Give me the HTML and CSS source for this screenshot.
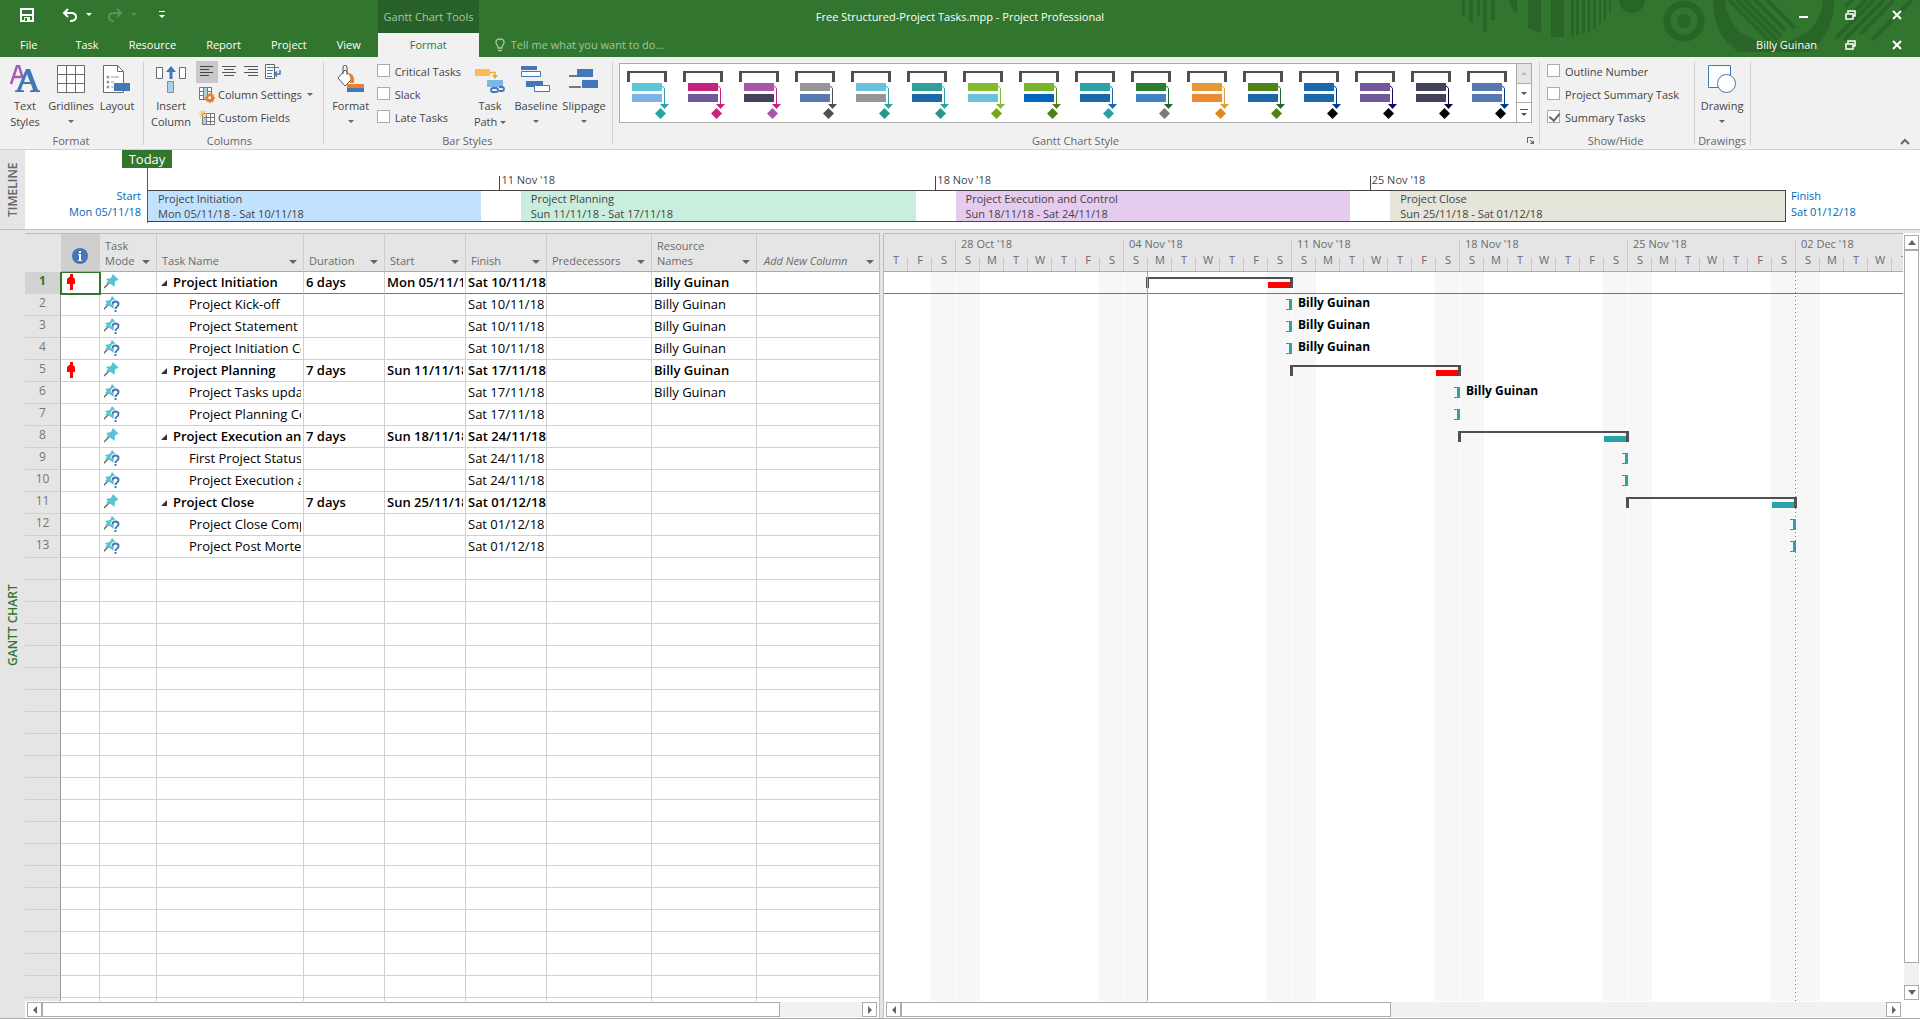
FILE: index.html
```html
<!DOCTYPE html>
<html lang="en">
<head>
    <meta charset="UTF-8">
    <meta name="viewport" content="width=device-width, initial-scale=1.0">
    <title>Free Structured-Project Tasks.mpp - Project Professional</title>
    <link rel="stylesheet" href="styles.css">
</head>
<body>
    <header class="top">
        <!-- Decoration behind the window buttons -->
        <svg class="pattern" width="460" height="57" viewBox="0 0 460 57">
            <g fill="#2a6528">
                <path d="M2 0h3v16h-3zM9 0h4v23h-4zM17 0h3v16h-3zM23 0h4v32h-4zM31 0h4v20h-4z"/>
                <path d="M49 0h8v14q-6-6-8-14zM68 0h13v33q-8-2-13-6zM91 0h13v37h-13zM111 0h3v36h-3zM116 0h3v35h-3zM122 0h3v34h-3zM128 0h2v32h-2zM133 0h3v29h-3zM139 0h2v25h-2zM144 0h2v20h-2zM149 0h2v12h-2z"/>
                <circle cx="172" cy="0" r="13"/>
                <circle cx="224" cy="21" r="7"/>
                <path d="M253 0h12q2 22 18 34l17 8h28l17-8q16-12 18-34h11q0 36-26 52h-69q-26-16-26-52z"/>
            </g>
            <g fill="none" stroke="#2a6528">
                <circle cx="224" cy="21" r="17" stroke-width="7"/>
                <path d="M269 0l44 44M277 0l40 40M285 0l36 36M295 0l30 30M307 0l28 28" stroke-width="4"/>
                <path d="M385 7l7-7M388 18l18-18M376 38l38-38M384 40l40-40M400 34l34-34M412 40l40-40" stroke-width="4"/>
            </g>
        </svg>

        <div class="title-bar">
            <div class="quick">
                <button class="icon-btn save" aria-label="Save"><svg width="14" height="14" viewBox="0 0 14 14"><path d="M1 1h12v12h-12z" fill="none" stroke="#fff" stroke-width="2"/><path d="M2 6h10v2h-10zM4 9h6v5h-6z" fill="#fff"/><path d="M5 10h2v3h-2z" fill="#31752f"/></svg></button>
                <button class="icon-btn undo" aria-label="Undo"><svg width="30" height="14" viewBox="0 0 30 14"><path d="M6 1l-4 4 4 4M2 5h7q5 0 5 4t-6 4" fill="none" stroke="#fff" stroke-width="2"/><path d="M24 5h6l-3 3z" fill="#fff"/></svg></button>
                <button class="icon-btn redo" aria-label="Redo"><svg width="30" height="14" viewBox="0 0 30 14"><path d="M10 1l4 4-4 4M14 5h-7q-5 0-5 4t5 4" fill="none" stroke="#5b9159" stroke-width="2"/><path d="M24 5h6l-3 3z" fill="#5b9159"/></svg></button>
                <button class="icon-btn" aria-label="Customize toolbar"><svg width="6" height="8" viewBox="0 0 6 8"><path d="M0 0h6v1h-6zM0 4h6l-3 3z" fill="#fff"/></svg></button>
            </div>
            <div class="tools-tab">Gantt Chart Tools</div>
            <h1 class="title">Free Structured-Project Tasks.mpp - Project Professional</h1>
            <div class="win-btns">
                <button class="icon-btn" aria-label="Minimize"><svg width="10" height="10" viewBox="0 0 10 10"><path d="M0 6h9v2h-9z" fill="#fff"/></svg></button>
                <button class="icon-btn" aria-label="Restore"><svg width="11" height="10" viewBox="0 0 11 10"><path d="M3 3v-2h7v5h-2M1 4h7v5h-7z" fill="none" stroke="#fff" stroke-width="1.5"/></svg></button>
                <button class="icon-btn" aria-label="Close"><svg width="10" height="10" viewBox="0 0 10 10"><path d="M1 1l8 8M9 1l-8 8" stroke="#fff" stroke-width="2"/></svg></button>
            </div>
        </div>

        <nav class="tabs">
            <button class="tab file">File</button>
            <button class="tab">Task</button>
            <button class="tab">Resource</button>
            <button class="tab">Report</button>
            <button class="tab">Project</button>
            <button class="tab">View</button>
            <button class="tab active">Format</button>
            <label class="tell">
                <svg width="10" height="14" viewBox="0 0 10 14"><path d="M3 10q0-2-1-3t-1-3q0-3 4-3t4 3q0 2-1 3t-1 3zM3 12.500h4" fill="none" stroke="#a3c5a1" stroke-width="1.300"/></svg>
                <input type="text" placeholder="Tell me what you want to do..." aria-label="Tell me what you want to do">
            </label>
            <span class="user">Billy Guinan</span>
            <div class="win-btns">
                <button class="icon-btn" aria-label="Restore document"><svg width="11" height="10" viewBox="0 0 11 10"><path d="M3 3v-2h7v5h-2M1 4h7v5h-7z" fill="none" stroke="#fff" stroke-width="1.500"/></svg></button>
                <button class="icon-btn" aria-label="Close document"><svg width="10" height="10" viewBox="0 0 10 10"><path d="M1 1l8 8M9 1l-8 8" stroke="#fff" stroke-width="2"/></svg></button>
            </div>
        </nav>
    </header>

    <section class="ribbon">
        <div class="group">
            <div class="group-body">
                <button class="big w46">
                    <svg width="30" height="28" viewBox="0 0 30 28"><path d="M1 19L7 1h2l4 13M3 12h8" fill="none" stroke="#a55bb0" stroke-width="2.500"/><path d="M5 27v-1.500l2-.5L16 4h4l8 21 2 .5V27H20v-1.500l3-.5-2-6h-8l-2 6 3 .5V27zM14 17h6l-3-8z" fill="#4278b8"/></svg>
                    <span>Text<br>Styles</span>
                </button>
                <button class="big w46">
                    <svg width="28" height="28" viewBox="0 0 28 28"><path d="M.5.5h27v27h-27z" fill="#fff"/><path d="M.5.5h27v27h-27zM9.500 0v28M18.500 0v28M0 9.500h28M0 18.500h28" fill="none" stroke="#6a6a6a"/></svg>
                    <span>Gridlines</span><i class="caret"></i>
                </button>
                <button class="big w46">
                    <svg width="28" height="28" viewBox="0 0 28 28"><path d="M.5.5h14l6 6v21h-20z" fill="#fff" stroke="#6a6a6a"/><path d="M14.500.5v6h6" fill="none" stroke="#6a6a6a"/><g fill="#999"><circle cx="5" cy="12" r="1.500"/><circle cx="5" cy="17" r="1.500"/><circle cx="5" cy="22" r="1.500"/><path d="M8 11.500h8v1h-8zM8 16.500h3v1h-3zM8 21.500h3v1h-3z"/></g><path d="M11 18h16v8h-16z" fill="#4278b8"/></svg>
                    <span>Layout</span>
                </button>
            </div>
            <div class="group-label">Format</div>
        </div>

        <div class="group columns">
            <div class="group-body">
                <button class="big w50">
                    <svg width="30" height="28" viewBox="0 0 30 28"><path d="M.5 2.500h6v11h-6zM23.500 2.500h6v11h-6z" fill="#fff" stroke="#6a6a6a"/><path d="M15 1l-5 6h3.500v7h3V7H20z" fill="#4278b8"/><path d="M11.500 16.500h6v11h-6z" fill="#a8d3e8" stroke="#8a8a8a"/></svg>
                    <span>Insert<br>Column</span>
                </button>
                <div class="stack">
                    <div class="aligns">
                        <button class="align on" aria-label="Align left"><svg width="14" height="14" viewBox="0 0 14 14"><path d="M0 1.500h13M0 4.500h9M0 7.500h13M0 10.500h9" stroke="#444"/></svg></button>
                        <button class="align" aria-label="Center"><svg width="14" height="14" viewBox="0 0 14 14"><path d="M0 1.500h14M2 4.500h10M0 7.500h14M2 10.500h10" stroke="#555"/></svg></button>
                        <button class="align" aria-label="Align right"><svg width="14" height="14" viewBox="0 0 14 14"><path d="M0 1.500h14M4 4.500h10M0 7.500h14M4 10.500h10" stroke="#555"/></svg></button>
                        <button class="align" aria-label="Wrap text"><svg width="16" height="16" viewBox="0 0 16 16"><path d="M.5.500h9v14h-9z" fill="#fff" stroke="#666"/><path d="M2 3.500h12M2 6.500h6M2 9.500h5M2 12.500h5" stroke="#4278b8"/><path d="M15 6v4h-5M12 7.500L9.500 10l2.500 2.500" fill="none" stroke="#4278b8" stroke-width="1.500"/></svg></button>
                    </div>
                    <button class="small"><svg width="16" height="16" viewBox="0 0 16 16"><path d="M.5.500h12v12h-12zM4.500 0v13M8.500 0v13M0 4.500h13M0 8.500h10" fill="#fff" stroke="#777"/><path d="M5 1h3v11H5z" fill="#a8d3e8"/><circle cx="11" cy="11" r="3" fill="none" stroke="#ec812d" stroke-width="2.500"/><path d="M11 6v2M11 14v2M6 11h2M14 11h2M7.500 7.500L9 9M13 13l1.500 1.500M7.500 14.500L9 13M13 9l1.500-1.500" stroke="#ec812d" stroke-width="1.500"/></svg><span>Column Settings</span><i class="caret"></i></button>
                    <button class="small"><svg width="16" height="16" viewBox="0 0 16 16"><path d="M3.500 3.500h12v11h-12zM7.500 3v12M11.500 3v12M3 7.500h13M3 11.500h13" fill="#fff" stroke="#777"/><path d="M4 8h3v6H4z" fill="#a8d3e8"/><path d="M4 0v8M0 4h8M1 1l6 6M7 1L1 7" stroke="#f2b04c"/></svg><span>Custom Fields</span></button>
                </div>
            </div>
            <div class="group-label">Columns</div>
        </div>

        <div class="group">
            <div class="group-body">
                <button class="big w50">
                    <svg width="28" height="28" viewBox="0 0 28 28"><path d="M8 5l8 8-8 8-7-8z" fill="#fff" stroke="#555"/><path d="M6 9V3q0-3 2-3t2 3v7" fill="none" stroke="#555"/><path d="M11 8q7 0 6 10h-4q1-6-2-10z" fill="#ec812d"/><path d="M10 19h17v4h-17z" fill="#ec812d"/><path d="M10 23h17v4h-17z" fill="#4278b8"/></svg>
                    <span>Format</span><i class="caret"></i>
                </button>
                <div class="stack checks">
                    <label><input type="checkbox">Critical Tasks</label>
                    <label><input type="checkbox">Slack</label>
                    <label><input type="checkbox">Late Tasks</label>
                </div>
                <button class="big w46">
                    <svg width="30" height="28" viewBox="0 0 30 28"><path d="M0 4h15v7H0z" fill="#fdb95c"/><path d="M15 7.500h5V12" fill="none" stroke="#f2a62f" stroke-width="1.500"/><path d="M17 10l3 4 3-4z" fill="#f2a62f"/><path d="M12 15h16v7H12z" fill="#7cb6e8"/><path d="M18 23h3a2 2 0 0 1 0 4h-3a2 2 0 0 1 0-4zM24 22h3a2 2 0 0 1 0 4h-3" fill="none" stroke="#4278b8" stroke-width="1.800"/></svg>
                    <span>Task<br>Path <i class="caret inline"></i></span>
                </button>
                <button class="big w46">
                    <svg width="30" height="28" viewBox="0 0 30 28"><path d="M0 1h16v4H0zM5 16h17v6H5z" fill="#4278b8"/><path d="M.5 6.500h19v5h-19zM13.500 20.500h15v6h-15z" fill="#fff" stroke="#4278b8"/></svg>
                    <span>Baseline</span><i class="caret"></i>
                </button>
                <button class="big w50">
                    <svg width="30" height="28" viewBox="0 0 30 28"><path d="M8 4h16v8H8zM13 15h16v8H13z" fill="#4278b8"/><path d="M0 10h8v2H0zM0 21h12v2H0z" fill="#777"/></svg>
                    <span>Slippage</span><i class="caret"></i>
                </button>
            </div>
            <div class="group-label">Bar Styles</div>
        </div>

        <div class="group gallery-group">
            <div class="gallery">
                <div class="styles" id="styles"></div>
                <div class="gallery-nav">
                    <button disabled aria-label="Previous row"><svg width="6" height="3"><path d="M0 3h6l-3-3z" fill="#bbb"/></svg></button>
                    <button aria-label="Next row"><svg width="6" height="3"><path d="M0 0h6l-3 3z" fill="#555"/></svg></button>
                    <button aria-label="More styles"><svg width="8" height="7"><path d="M0 0h8v1h-8zM1 4h6l-3 3z" fill="#555"/></svg></button>
                </div>
            </div>
            <div class="group-label">Gantt Chart Style</div>
            <button class="launcher" aria-label="Bar styles dialog"><svg width="8" height="8" viewBox="0 0 8 8"><path d="M.5 6V.500H6M3 3l3 3" fill="none" stroke="#666"/><path d="M7 3v4H3z" fill="#666"/></svg></button>
        </div>

        <div class="group show-hide">
            <div class="group-body">
                <div class="stack checks">
                    <label><input type="checkbox">Outline Number</label>
                    <label><input type="checkbox">Project Summary Task</label>
                    <label><input type="checkbox" checked>Summary Tasks</label>
                </div>
            </div>
            <div class="group-label">Show/Hide</div>
        </div>

        <div class="group">
            <div class="group-body">
                <button class="big w50">
                    <svg width="28" height="28" viewBox="0 0 28 28"><path d="M.5.500h22v22H.5z" fill="#fff" stroke="#4278b8"/><circle cx="18.500" cy="18.500" r="9" fill="#fff" stroke="#4278b8"/></svg>
                    <span>Drawing</span><i class="caret"></i>
                </button>
            </div>
            <div class="group-label">Drawings</div>
        </div>
        <button class="collapse" aria-label="Collapse ribbon"><svg width="10" height="7" viewBox="0 0 10 7"><path d="M1 6l4-4 4 4" fill="none" stroke="#666" stroke-width="2"/></svg></button>
    </section>

    <section class="timeline">
        <div class="side">TIMELINE</div>
        <div class="edge start">Start<br>Mon 05/11/18</div>
        <div class="track">
            <span class="today">Today</span>
            <span class="mark" style="left: 21.500%">11 Nov '18</span>
            <span class="mark" style="left: 48.100%">18 Nov '18</span>
            <span class="mark" style="left: 74.600%">25 Nov '18</span>
            <div class="segments">
                <div class="segment blue">Project Initiation<br>Mon 05/11/18 - Sat 10/11/18</div>
                <div class="segment green">Project Planning<br>Sun 11/11/18 - Sat 17/11/18</div>
                <div class="segment purple">Project Execution and Control<br>Sun 18/11/18 - Sat 24/11/18</div>
                <div class="segment beige">Project Close<br>Sun 25/11/18 - Sat 01/12/18</div>
            </div>
        </div>
        <div class="edge">Finish<br>Sat 01/12/18</div>
    </section>

    <main class="panes">
        <div class="side current">GANTT CHART</div>

        <div class="sheet">
            <div class="sheet-scroll">
                <table>
                    <colgroup>
                        <col class="c-num"><col class="c-info"><col class="c-mode"><col class="c-name">
                        <col class="c-date"><col class="c-date"><col class="c-date">
                        <col class="c-pred"><col class="c-pred"><col class="c-add">
                    </colgroup>
                    <thead>
                        <tr>
                            <th class="num"></th>
                            <th class="info"><svg width="16" height="16" viewBox="0 0 16 16"><circle cx="8" cy="8" r="8" fill="#4278b8"/><path d="M7 3h2v2H7zM6 6h3v6h1v1H6v-1h1V7H6z" fill="#fff"/></svg></th>
                            <th>Task<br>Mode</th>
                            <th>Task Name</th>
                            <th>Duration</th>
                            <th>Start</th>
                            <th>Finish</th>
                            <th>Predecessors</th>
                            <th>Resource<br>Names</th>
                            <th class="add">Add New Column</th>
                        </tr>
                    </thead>
                    <tbody id="rows"></tbody>
                </table>
            </div>
            <div class="hbar">
                <button aria-label="Scroll left"><svg width="4" height="8"><path d="M4 0v8l-4-4z" fill="#666"/></svg></button>
                <div class="rail"><div class="thumb" style="width: 90%"></div></div>
                <button aria-label="Scroll right"><svg width="4" height="8"><path d="M0 0v8l4-4z" fill="#666"/></svg></button>
            </div>
        </div>

        <div class="gantt">
            <div class="scale" id="scale"></div>
            <div class="chart" id="chart">
                <div class="line status"></div>
                <div class="line finish"></div>
            </div>
            <div class="hbar">
                <button aria-label="Scroll left"><svg width="4" height="8"><path d="M4 0v8l-4-4z" fill="#666"/></svg></button>
                <div class="rail"><div class="thumb" style="width: 49.700%"></div></div>
                <button aria-label="Scroll right"><svg width="4" height="8"><path d="M0 0v8l4-4z" fill="#666"/></svg></button>
            </div>
        </div>

        <div class="vbar">
            <button aria-label="Scroll up"><svg width="8" height="5"><path d="M0 5h8l-4-5z" fill="#666"/></svg></button>
            <div class="rail"><div class="thumb"></div></div>
            <button aria-label="Scroll down"><svg width="8" height="5"><path d="M0 0h8l-4 5z" fill="#666"/></svg></button>
        </div>
    </main>

    <script>
        const DAY = 24;
        const ROW = 22;
        const ROW_COUNT = 34;

        // start and end are day numbers, counted from the left edge of the chart
        const tasks = [
            { name: 'Project Initiation', days: '6 days', start: 'Mon 05/11/18', finish: 'Sat 10/11/18', who: 'Billy Guinan', from: 11, to: 17, over: true },
            { name: 'Project Kick-off', finish: 'Sat 10/11/18', who: 'Billy Guinan', to: 17 },
            { name: 'Project Statement', finish: 'Sat 10/11/18', who: 'Billy Guinan', to: 17 },
            { name: 'Project Initiation Complete', finish: 'Sat 10/11/18', who: 'Billy Guinan', to: 17 },
            { name: 'Project Planning', days: '7 days', start: 'Sun 11/11/18', finish: 'Sat 17/11/18', who: 'Billy Guinan', from: 17, to: 24, over: true },
            { name: 'Project Tasks updated', finish: 'Sat 17/11/18', who: 'Billy Guinan', to: 24 },
            { name: 'Project Planning Complete', finish: 'Sat 17/11/18', to: 24 },
            { name: 'Project Execution and Control', days: '7 days', start: 'Sun 18/11/18', finish: 'Sat 24/11/18', from: 24, to: 31 },
            { name: 'First Project Status', finish: 'Sat 24/11/18', to: 31 },
            { name: 'Project Execution and Control', finish: 'Sat 24/11/18', to: 31 },
            { name: 'Project Close', days: '7 days', start: 'Sun 25/11/18', finish: 'Sat 01/12/18', from: 31, to: 38 },
            { name: 'Project Close Complete', finish: 'Sat 01/12/18', to: 38 },
            { name: 'Project Post Mortem', finish: 'Sat 01/12/18', to: 38 }
        ];

        // bar, second bar, link, diamond
        const barStyles = [
            ['#5fc6d6', '#7db2e8', '#2aa3a6', '#2aa3a6'],
            ['#c4237f', '#71589b', '#c4237f', '#c4237f'],
            ['#a857a8', '#43435c', '#c4237f', '#a857a8'],
            ['#969696', '#5779b0', '#505050', '#505050'],
            ['#69c1dc', '#969696', '#2aa3a6', '#2a9686'],
            ['#2f9f9c', '#1b68ad', '#2aa3a6', '#2a9686'],
            ['#82bc2e', '#69c1dc', '#82bc2e', '#76a51f'],
            ['#7ab32c', '#0067c0', '#4a801c', '#4a801c'],
            ['#2aa3a6', '#1b68ad', '#1b68ad', '#2a9da6'],
            ['#2f7d32', '#3f83c6', '#28642a', '#7a7a7a'],
            ['#e49a35', '#ec8a32', '#e49a35', '#d98a20'],
            ['#50821a', '#1b68ad', '#28642a', '#50821a'],
            ['#1b68ad', '#1b68ad', '#003a92', '#000'],
            ['#71589b', '#71589b', '#100d62', '#000'],
            ['#43435c', '#43435c', '#08083c', '#000'],
            ['#5779b0', '#5779b0', '#003a92', '#000']
        ];

        const man = '<svg class="man" width="8" height="16" viewBox="0 0 8 16"><path d="M3 0h3v3H3zM2 3h4l2 2v5H6v6H3v-6H0V5z" fill="#f00"/></svg>';
        const pinPath = '<path d="M0 14l5-5" stroke="#666" stroke-width="1.500"/><path d="M2 5l5-1 2-4 5.500 5.500-3.500 2-.5 5.500-3-2.500-5.500-1.500 2-2z" fill="#57c3d3"/>';

        function pin(manual) {
            if (manual) {
                return `<svg width="18" height="16" viewBox="0 0 18 16">${pinPath}</svg>`;
            }
            const mark = 'M9.500 8.500q0-3 3-3t3 2.500q0 1.500-1.500 2.500t-1.500 2.500';
            return `<svg width="18" height="16" viewBox="1 0 18 16">
                ${pinPath}
                <path d="${mark}M12.500 14v2" fill="none" stroke="#fff" stroke-width="4"/>
                <path d="${mark}M12.500 14v2" fill="none" stroke="#4278b8" stroke-width="2"/>
            </svg>`;
        }

        function drawRows() {
            let html = '';
            for (let i = 0; i < ROW_COUNT; i++) {
                const t = tasks[i];
                if (!t) {
                    html += '<tr><td class="num"></td>' + '<td></td>'.repeat(9) + '</tr>';
                    continue;
                }
                const summary = t.from !== undefined;
                const classes = (summary ? 'summary' : '') + (i === 0 ? ' selected' : '');
                html += `<tr class="${classes}">
                    <td class="num">${i + 1}</td>
                    <td class="flag">${t.over ? man : ''}</td>
                    <td class="mode">${pin(summary)}</td>
                    <td class="name"><div>${summary ? '<svg class="fold" width="6" height="6"><path d="M6 0v6H0z" fill="#333"/></svg>' : ''}${t.name}</div></td>
                    <td><div>${t.days || ''}</div></td>
                    <td><div>${t.start || ''}</div></td>
                    <td class="end"><div>${t.finish}</div></td>
                    <td></td>
                    <td><div>${t.who || ''}</div></td>
                    <td></td>
                </tr>`;
            }
            document.getElementById('rows').innerHTML = html;
        }

        function drawScale() {
            const weeks = [
                ['', 'TFS'], ["28 Oct '18", 'SMTWTFS'], ["04 Nov '18", 'SMTWTFS'], ["11 Nov '18", 'SMTWTFS'],
                ["18 Nov '18", 'SMTWTFS'], ["25 Nov '18", 'SMTWTFS'], ["02 Dec '18", 'SMTWTFS']
            ];
            document.getElementById('scale').innerHTML = weeks.map(([label, days]) => `
                <div class="week">
                    <div class="week-name">${label}</div>
                    <div class="days">${[...days].map(d => `<span>${d}</span>`).join('')}</div>
                </div>`).join('');
        }

        function drawChart() {
            let html = '';
            tasks.forEach((t, i) => {
                const top = i * ROW + 5;
                const end = t.to * DAY;
                if (t.from !== undefined) {
                    html += `<div class="bar" style="left:${t.from * DAY - 2}px;top:${top}px;width:${(t.to - t.from) * DAY + 3}px"></div>`;
                    html += `<div class="work ${t.over ? 'over' : ''}" style="left:${end - DAY}px;top:${top + 5}px"></div>`;
                } else {
                    html += `<div class="bracket" style="left:${end - 6}px;top:${top}px"></div>`;
                    if (t.who) {
                        html += `<div class="who" style="left:${end + 6}px;top:${top - 5}px">${t.who}</div>`;
                    }
                }
            });
            document.getElementById('chart').insertAdjacentHTML('afterbegin', html);
        }

        function drawStyles() {
            document.getElementById('styles').innerHTML = barStyles.map(([a, b, link, end], i) => `
                <button aria-label="Style ${i + 1}"><svg width="44" height="50" viewBox="0 0 44 50">
                    <path d="M0 11V0h40v11h-3V2H3v9z" fill="#505050"/>
                    <path d="M5 12h30v8H5z" fill="${a}"/>
                    <path d="M5 23h30v8H5z" fill="${b}"/>
                    <path d="M35 15.500h1l1.500 2V34" fill="none" stroke="${link}"/>
                    <path d="M33 33h9l-4.500 5z" fill="${link}"/>
                    <path d="M33.500 37l5.500 5.500-5.500 5.500-5.500-5.500z" fill="${end}"/>
                </svg></button>`).join('');
        }

        drawStyles();
        drawRows();
        drawScale();
        drawChart();
    </script>
</body>
</html>
```

FILE: styles.css
```css
* {
    box-sizing: border-box;
    margin: 0;
    padding: 0;
}

body {
    display: flex;
    flex-direction: column;
    height: 100vh;
    overflow: hidden;
    background-color: #e5e5e5;
    border-bottom: 1px solid #ababab;
    color: #444;
    font-family: "Open Sans", "Segoe UI", sans-serif;
    font-size: 11px;
    line-height: 16px;
}

button, input {
    font: inherit;
    color: inherit;
    background: none;
    border: none;
}

svg {
    display: block;
    flex: none;
}

/* Title bar and tabs */
.top {
    position: relative;
    background-color: #31752f;
    color: #fff;
}

.pattern {
    position: absolute;
    top: 0;
    right: 0;
}

.title-bar, .tabs {
    position: relative;
    display: flex;
}

.title-bar {
    height: 33px;
}

.quick {
    display: flex;
    align-items: center;
    width: 378px;
    padding: 0 0 3px 20px;
}

.save {
    margin-right: 28px;
}

.undo {
    margin-right: 15px;
}

.redo {
    margin-right: 22px;
}

.tools-tab {
    width: 101px;
    padding-top: 9px;
    background-color: #28602a;
    color: #a6c8a4;
    text-align: center;
    white-space: nowrap;
}

.title {
    position: absolute;
    left: 0;
    right: 0;
    top: 9px;
    font-size: 11px;
    font-weight: normal;
    text-align: center;
    pointer-events: none;
}

.win-btns {
    display: flex;
    align-items: center;
    gap: 36px;
    padding-right: 18px;
}

.title-bar .win-btns {
    margin-left: auto;
    padding-bottom: 3px;
}

.tabs {
    height: 24px;
}

.tab {
    padding: 0 15px;
}

.tab.file {
    padding: 0 23px 0 20px;
}

.tab.active {
    width: 101px;
    margin-left: 2px;
    background-color: #f1f1f1;
    color: #31752f;
}

.tell {
    display: flex;
    flex: 1;
    align-items: center;
    gap: 6px;
    padding-left: 16px;
}

.tell input {
    width: 200px;
}

.tell input::placeholder {
    color: #a3c5a1;
    opacity: 1;
}

.user {
    padding: 4px 28px 0 0;
}

/* Ribbon */
.ribbon {
    position: relative;
    display: flex;
    height: 93px;
    padding: 4px 0;
    background-color: #f1f1f1;
    border-bottom: 1px solid #d2d2d2;
}

.group {
    position: relative;
    display: flex;
    flex-direction: column;
    justify-content: space-between;
    padding: 0 3px 0 2px;
    border-right: 1px solid #d2d2d2;
}

.group-body {
    display: flex;
    align-items: flex-start;
}

.group-label {
    height: 10px;
    color: #666;
    line-height: 12px;
    text-align: center;
}

.columns {
    padding-right: 10px;
}

.show-hide {
    padding: 0 9px 0 6px;
}

.big {
    display: flex;
    flex-direction: column;
    align-items: center;
    padding-top: 4px;
    white-space: nowrap;
}

.big span {
    margin-top: 5px;
}

.w46 {
    width: 46px;
}

.w50 {
    width: 50px;
}

.caret {
    width: 0;
    border: 3px solid transparent;
    border-top-color: #666;
    border-bottom: none;
}

.big .caret {
    margin-top: 6px;
}

.big .caret.inline {
    display: inline-block;
    margin: 0 0 2px 0;
}

.stack {
    display: flex;
    flex-direction: column;
}

.aligns {
    display: flex;
}

.align {
    display: flex;
    align-items: center;
    justify-content: center;
    width: 22px;
    height: 22px;
}

.align.on {
    background-color: #c8c8c8;
}

.small {
    display: flex;
    align-items: center;
    gap: 3px;
    height: 23px;
    padding-left: 3px;
    white-space: nowrap;
}

.small .caret {
    margin-left: 2px;
}

.checks {
    padding: 3px 6px 0 1px;
}

.checks label {
    display: flex;
    align-items: flex-start;
    gap: 5px;
    height: 23px;
    white-space: nowrap;
}

.checks input {
    position: relative;
    width: 13px;
    height: 13px;
    background-color: #fff;
    border: 1px solid #ababab;
    appearance: none;
}

.checks input:checked::after {
    content: "";
    position: absolute;
    left: 3px;
    top: 0;
    width: 5px;
    height: 8px;
    border: solid #666;
    border-width: 0 2px 2px 0;
    transform: rotate(40deg);
}

.gallery-group {
    padding: 2px 7px 0 6px;
}

.gallery {
    display: flex;
    height: 60px;
    background-color: #fff;
    border: 1px solid #ababab;
}

.styles {
    display: flex;
}

.styles button {
    width: 56px;
    padding: 5px 0 0 7px;
}

.gallery-nav {
    display: flex;
    flex-direction: column;
    width: 15px;
    border-left: 1px solid #ababab;
}

.gallery-nav button {
    display: flex;
    flex: 1;
    align-items: center;
    justify-content: center;
}

.gallery-nav button + button {
    border-top: 1px solid #ababab;
}

.gallery-nav button:disabled {
    background-color: #e5e5e5;
}

.launcher {
    position: absolute;
    right: 4px;
    bottom: 0;
}

.collapse {
    position: absolute;
    right: 10px;
    bottom: 4px;
}

/* Vertical view names */
.side {
    width: 25px;
    flex: none;
    background-color: #e5e5e5;
    color: #666;
    font-size: 12px;
    font-weight: 600;
    line-height: 25px;
    text-align: center;
    writing-mode: vertical-rl;
    transform: rotate(180deg);
}

.side.current {
    color: #31752f;
}

/* Timeline */
.timeline {
    display: flex;
    height: 80px;
    background-color: #fff;
    border-bottom: 1px solid #bdbdbd;
}

.edge {
    width: 134px;
    padding: 38px 0 0 5px;
    color: #0067b8;
}

.edge.start {
    width: 122px;
    padding: 38px 6px 0 0;
    text-align: right;
}

.track {
    position: relative;
    flex: 1;
    padding-top: 40px;
}

.track::before {
    content: "";
    position: absolute;
    left: 0;
    top: 18px;
    width: 1px;
    height: 55px;
    background-color: #31752f;
}

.today {
    position: absolute;
    left: -25px;
    top: 0;
    width: 50px;
    background-color: #31752f;
    color: #fff;
    font-size: 13px;
    line-height: 18px;
    text-align: center;
}

.mark {
    position: absolute;
    top: 26px;
    height: 14px;
    padding-left: 1px;
    border-left: 1px solid #444;
    line-height: 8px;
    white-space: nowrap;
}

.segments {
    display: grid;
    grid-template-columns: 333fr 395fr 395fr 395fr;
    column-gap: 40px;
    height: 32px;
    margin-left: 1px;
    border: solid #444;
    border-width: 1px 1px 1px 0;
}

.segment {
    padding-left: 10px;
    line-height: 15px;
    white-space: nowrap;
}

.blue {
    background-color: #c0e2ff;
}

.green {
    background-color: #c9eedd;
}

.purple {
    background-color: #e5cbee;
}

.beige {
    background-color: #e5e5da;
}

/* Sheet */
.panes {
    display: flex;
    flex: 1;
    min-height: 0;
    padding-top: 3px;
}

.sheet, .gantt {
    display: flex;
    flex-direction: column;
    min-width: 0;
    border-top: 1px solid #bdbdbd;
}

.sheet {
    width: 855px;
    flex: none;
    border-right: 1px solid #bdbdbd;
}

.sheet-scroll {
    flex: 1;
    min-height: 0;
    overflow: hidden;
    background-color: #fff;
}

table {
    width: 855px;
    border-spacing: 0;
    table-layout: fixed;
}

.c-num {
    width: 36px;
}

.c-info {
    width: 39px;
}

.c-mode {
    width: 57px;
}

.c-name {
    width: 147px;
}

.c-date {
    width: 81px;
}

.c-pred {
    width: 105px;
}

.c-add {
    width: 123px;
}

th {
    position: relative;
    height: 38px;
    padding: 0 0 3px 5px;
    background-color: #e5e5e5;
    border-right: 1px solid #ccc;
    border-bottom: 1px solid #ababab;
    color: #6b6b6b;
    font-weight: normal;
    line-height: 15px;
    text-align: left;
    vertical-align: bottom;
    white-space: nowrap;
}

th::after {
    content: "";
    position: absolute;
    right: 6px;
    bottom: 7px;
    border: 4px solid transparent;
    border-top-color: #666;
    border-bottom: none;
}

th.num::after, th.info::after {
    display: none;
}

th.num {
    border-right: none;
    border-bottom-color: #e5e5e5;
}

th.info {
    padding: 0 0 7px 11px;
    background-color: #cfcfcf;
}

th.add {
    padding-left: 7px;
    font-style: italic;
}

td {
    height: 22px;
    padding: 0 2px 2px;
    border-right: 1px solid #d0d0d0;
    border-bottom: 1px solid #d0d0d0;
    color: #000;
    font-size: 13px;
    line-height: 18px;
    white-space: nowrap;
}

td div {
    overflow: hidden;
}

td.end {
    padding-right: 0;
}

td.num {
    padding-bottom: 4px;
    background-color: #e5e5e5;
    border-right-color: #999;
    color: #777;
    font-size: 12px;
    line-height: 16px;
    text-align: center;
}

th:last-child, td:last-child {
    border-right: none;
}

.flag {
    padding-left: 6px;
}

.mode {
    padding-left: 4px;
}

.name {
    padding-left: 32px;
}

.summary td {
    font-weight: 600;
}

.summary td.num {
    font-weight: normal;
}

.summary .name {
    padding-left: 4px;
}

.fold {
    display: inline-block;
    margin-right: 6px;
    vertical-align: 1px;
}

.selected td {
    border-bottom-color: #777;
}

.summary.selected .num {
    background-color: #d2d2d2;
    border-bottom-color: #d0d0d0;
    color: #31752f;
    font-weight: bold;
}

.selected .flag {
    outline: 2px solid #31752f;
    outline-offset: -1px;
}

/* Gantt chart */
.gantt {
    flex: 1;
    margin-left: 3px;
    border-left: 1px solid #bdbdbd;
}

.scale {
    display: flex;
    height: 38px;
    overflow: hidden;
    border-bottom: 1px solid #ababab;
    color: #6b6b6b;
}

.week {
    flex: none;
    background: linear-gradient(#c8c8c8, #c8c8c8) right bottom / 1px 31px no-repeat;
}

.week-name {
    height: 18px;
    padding: 2px 0 0 5px;
}

.days {
    display: flex;
    height: 19px;
}

.days span {
    width: 24px;
    background: linear-gradient(#c8c8c8, #c8c8c8) right bottom / 1px 13px no-repeat;
    text-align: center;
}

.chart {
    position: relative;
    flex: 1;
    overflow: hidden;
    background: #fff repeating-linear-gradient(90deg, transparent 0 47px, #f7f7f7 47px 71px, transparent 71px 72px, #f7f7f7 72px 96px, transparent 96px 168px);
}

/* Rule under the selected row */
.chart::before {
    content: "";
    position: absolute;
    left: 0;
    right: 0;
    top: 21px;
    height: 1px;
    background-color: #777;
}

.line {
    position: absolute;
    top: 0;
    bottom: 0;
    width: 1px;
}

.status {
    left: 263px;
    background-color: #8fb98d;
}

.finish {
    left: 911px;
    background: repeating-linear-gradient(#777 0 1px, transparent 1px 4px);
}

.bar, .work, .bracket, .who {
    position: absolute;
}

.bar {
    height: 11px;
    border: 3px solid #505050;
    border-top-width: 2px;
    border-bottom: none;
}

.work {
    width: 22px;
    height: 6px;
    background-color: #2aa3a6;
}

.work.over {
    background-color: #f00;
}

.bracket {
    width: 6px;
    height: 11px;
    border: 1px solid #2aa3a6;
    border-right-width: 3px;
    border-left: none;
}

.who {
    color: #000;
    font-size: 12px;
    font-weight: bold;
    line-height: 18px;
    white-space: nowrap;
}

/* Scroll bars */
.hbar, .vbar {
    display: flex;
    background-color: #fff;
}

.hbar {
    height: 17px;
    padding: 1px 2px;
}

.hbar button, .vbar button {
    display: flex;
    align-items: center;
    justify-content: center;
    width: 15px;
    height: 15px;
    flex: none;
    background-color: #fff;
    border: 1px solid #ababab;
}

.rail {
    flex: 1;
    background-color: #f1f1f1;
}

.thumb {
    height: 100%;
    background-color: #fff;
    border: 1px solid #ababab;
}

.vbar {
    flex-direction: column;
    width: 17px;
    padding: 2px 1px 18px;
}

.vbar .thumb {
    height: 97%;
}
```
